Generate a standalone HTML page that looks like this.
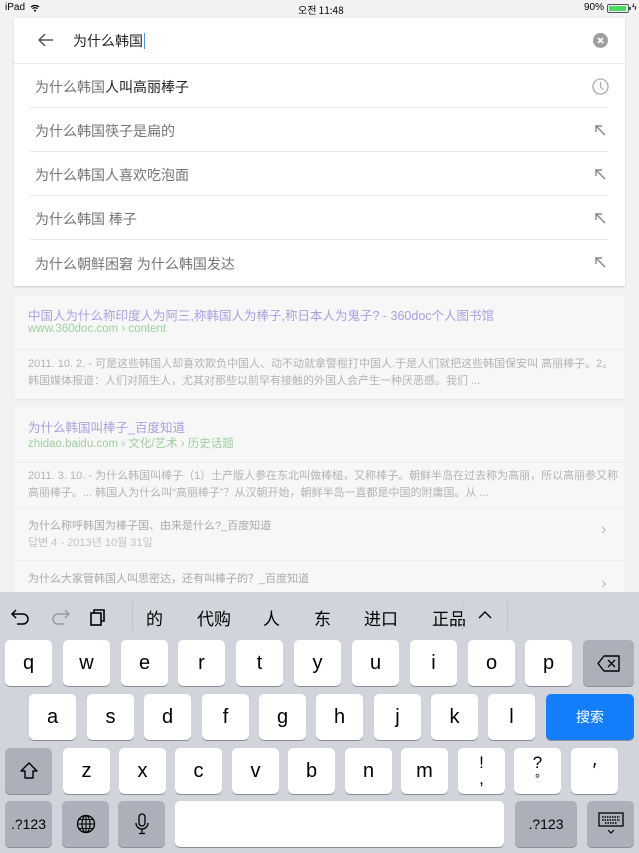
<!DOCTYPE html>
<html><head><meta charset="utf-8"><style>
*{margin:0;padding:0;box-sizing:border-box}
body{width:639px;height:853px;overflow:hidden;background:#f2f2f2;font-family:"Liberation Sans","Noto Sans CJK SC",sans-serif;position:relative}
.a{position:absolute}
.card{position:absolute;background:#fff;box-shadow:0 1px 2px rgba(0,0,0,.15)}
.sug{position:absolute;left:35px;font-size:14px;color:#757575;white-space:nowrap}
.div{position:absolute;left:30px;width:578px;height:1px;background:#ebebeb}
.rc{position:absolute;left:14px;width:611px;background:#f7f7f7;box-shadow:0 1px 1px rgba(0,0,0,.06)}
.t{position:absolute;left:14px;font-size:12.5px;white-space:nowrap}
.ln{position:absolute;left:0;width:611px;height:1px;background:#ececec}
.kb{position:absolute;left:0;top:592px;width:639px;height:261px;background:#d1d5db}
.k{position:absolute;background:#fff;border-radius:5px;box-shadow:0 1px 0 #8a8e94;font-size:20px;color:#000;display:flex;align-items:center;justify-content:center;height:46px}
.g{background:#abb0ba}
.c{position:absolute;top:605px;font-size:17px;color:#000;font-family:"Noto Sans CJK SC",sans-serif}
</style></head><body>
<div class="a" style="left:5px;top:2px;font-size:10px">iPad</div>
<svg class="a" style="left:30px;top:4px" width="10" height="8" viewBox="0 0 10 8"><path d="M1 3a6 6 0 0 1 8 0M2.5 4.6a4 4 0 0 1 5 0" stroke="#000" fill="none" stroke-width="1.2"/><circle cx="5" cy="6.6" r="1" fill="#000"/></svg>
<div class="a" style="left:298px;top:2px;font-size:10px;font-family:'Noto Sans CJK KR',sans-serif">오전 11:48</div>
<div class="a" style="left:584px;top:2px;font-size:10px">90%</div>
<div class="a" style="left:607px;top:4px;width:22px;height:9px;border:1px solid #555;border-radius:2px;padding:1px"><div style="width:17px;height:5px;background:#4cd964"></div></div>
<div class="a" style="left:629px;top:7px;width:2px;height:3px;background:#555"></div>
<div class="a" style="left:632px;top:2px;font-size:9px">ϟ</div>

<div class="card" style="left:14px;top:18px;width:611px;height:268px"></div>
<svg class="a" style="left:38px;top:33px" width="16" height="14" viewBox="0 0 16 14"><path d="M15 7H2M7 1L1 7l6 6" stroke="#555" stroke-width="1.5" fill="none"/></svg>
<div class="a" style="left:73px;top:31px;font-size:14px;color:#222">为什么韩国<span style="border-left:1px solid #4a90e2;margin-left:1px"></span></div>
<svg class="a" style="left:593px;top:33px" width="15" height="15" viewBox="0 0 15 15"><circle cx="7.5" cy="7.5" r="7.5" fill="#9e9e9e"/><path d="M5 5l5 5M10 5l-5 5" stroke="#fff" stroke-width="1.8"/></svg>
<div class="a" style="left:14px;top:63px;width:611px;height:1px;background:#e6e6e6"></div>
<div class="sug" style="top:77px">为什么韩国<span style="color:#222">人叫高丽棒子</span></div>
<svg class="a" style="left:592px;top:78px" width="17" height="17" viewBox="0 0 17 17"><circle cx="8.5" cy="8.5" r="7.5" stroke="#aaa" stroke-width="1.3" fill="none"/><path d="M8.5 4v5l3 2.5" stroke="#aaa" stroke-width="1.3" fill="none"/></svg>
<div class="div" style="top:107px"></div>
<div class="sug" style="top:121px">为什么韩国筷子是扁的</div>
<div class="div" style="top:151px"></div>
<div class="sug" style="top:165px">为什么韩国人喜欢吃泡面</div>
<div class="div" style="top:195px"></div>
<div class="sug" style="top:209px">为什么韩国 棒子</div>
<div class="div" style="top:239px"></div>
<div class="sug" style="top:254px">为什么朝鲜困窘 为什么韩国发达</div>
<svg class="a" style="left:595px;top:125px" width="11" height="11" viewBox="0 0 11 11"><path d="M10 10L1.5 1.5M1 7V1h6" stroke="#888" stroke-width="1.4" fill="none"/></svg>
<svg class="a" style="left:595px;top:169px" width="11" height="11" viewBox="0 0 11 11"><path d="M10 10L1.5 1.5M1 7V1h6" stroke="#888" stroke-width="1.4" fill="none"/></svg>
<svg class="a" style="left:595px;top:213px" width="11" height="11" viewBox="0 0 11 11"><path d="M10 10L1.5 1.5M1 7V1h6" stroke="#888" stroke-width="1.4" fill="none"/></svg>
<svg class="a" style="left:595px;top:257px" width="11" height="11" viewBox="0 0 11 11"><path d="M10 10L1.5 1.5M1 7V1h6" stroke="#888" stroke-width="1.4" fill="none"/></svg>

<div class="rc" style="top:296px;height:103px">
<div class="t" style="top:9px;color:#a9a0e0">中国人为什么称印度人为阿三,称韩国人为棒子,称日本人为鬼子? - 360doc个人图书馆</div>
<div class="t" style="top:27px;color:#9fcf9f;font-size:11.5px">www.360doc.com › content</div>
<div class="ln" style="top:53px"></div>
<div class="t" style="top:60px;color:#b3b3b3;font-size:11px;line-height:17px;white-space:normal;width:594px">2011. 10. 2. - 可是这些韩国人却喜欢欺负中国人、动不动就拿警棍打中国人.于是人们就把这些韩国保安叫 高丽棒子。2。韩国媒体报道：人们对陌生人，尤其对那些以前罕有接触的外国人会产生一种厌恶感。我们 ...</div>
</div>
<div class="rc" style="top:407px;height:190px">
<div class="t" style="top:10px;color:#a9a0e0">为什么韩国叫棒子_百度知道</div>
<div class="t" style="top:28px;color:#9fcf9f;font-size:11.5px">zhidao.baidu.com › 文化/艺术 › 历史话题</div>
<div class="ln" style="top:55px"></div>
<div class="t" style="top:61px;color:#b3b3b3;font-size:11px;line-height:17px;white-space:normal;width:594px">2011. 3. 10. - 为什么韩国叫棒子（1）土产版人参在东北叫做棒槌，又称棒子。朝鲜半岛在过去称为高丽，所以高丽参又称高丽棒子。... 韩国人为什么叫“高丽棒子”？从汉朝开始，朝鲜半岛一直都是中国的附庸国。从 ...</div>
<div class="ln" style="top:100px"></div>
<div class="t" style="top:110px;color:#aaa;font-size:11px">为什么称呼韩国为棒子国、由来是什么?_百度知道</div>
<div class="t" style="top:127px;color:#c3c3c3;font-size:11px;font-family:'Liberation Sans','Noto Sans CJK KR',sans-serif">답변 4 - 2013년 10월 31일</div>
<div class="a" style="left:587px;top:114px;color:#bbb;font-size:16px">›</div>
<div class="ln" style="top:153px"></div>
<div class="t" style="top:163px;color:#aaa;font-size:11px">为什么大家管韩国人叫思密达，还有叫棒子的？_百度知道</div>
<div class="a" style="left:587px;top:168px;color:#bbb;font-size:16px">›</div>
</div>

<div class="kb"></div>
<svg class="a" style="left:11px;top:608px" width="20" height="18" viewBox="0 0 20 18"><path d="M5 2L1 6l4 4M1 6h11a5 5 0 0 1 0 10H6" stroke="#000" stroke-width="1.5" fill="none"/></svg>
<svg class="a" style="left:50px;top:608px" width="20" height="18" viewBox="0 0 20 18"><path d="M15 2l4 4-4 4M19 6H8a5 5 0 0 0 0 10h6" stroke="#999" stroke-width="1.5" fill="none"/></svg>
<svg class="a" style="left:89px;top:607px" width="18" height="20" viewBox="0 0 18 20"><rect x="2" y="6" width="10" height="12" stroke="#000" stroke-width="1.6" fill="none"/><path d="M5 6V3h10v11h-3" stroke="#000" stroke-width="1.6" fill="none"/></svg>
<div class="a" style="left:132px;top:602px;width:1px;height:28px;background:#bfc3c9"></div>
<div class="c" style="left:146px">的</div>
<div class="c" style="left:197px">代购</div>
<div class="c" style="left:263px">人</div>
<div class="c" style="left:314px">东</div>
<div class="c" style="left:364px">进口</div>
<div class="c" style="left:432px">正品</div>
<div class="a" style="left:462px;top:602px;width:1px;height:28px;background:#bfc3c9"></div>
<svg class="a" style="left:478px;top:610px" width="14" height="9" viewBox="0 0 14 9"><path d="M1 8l6-6 6 6" stroke="#000" stroke-width="1.4" fill="none"/></svg>
<div class="a" style="left:507px;top:602px;width:1px;height:28px;background:#bfc3c9"></div>

<div class="k" style="left:5px;top:640px;width:47px">q</div>
<div class="k" style="left:63px;top:640px;width:47px">w</div>
<div class="k" style="left:121px;top:640px;width:47px">e</div>
<div class="k" style="left:178px;top:640px;width:47px">r</div>
<div class="k" style="left:236px;top:640px;width:47px">t</div>
<div class="k" style="left:294px;top:640px;width:47px">y</div>
<div class="k" style="left:352px;top:640px;width:47px">u</div>
<div class="k" style="left:410px;top:640px;width:47px">i</div>
<div class="k" style="left:468px;top:640px;width:47px">o</div>
<div class="k" style="left:525px;top:640px;width:47px">p</div>
<div class="k g" style="left:583px;top:640px;width:51px"><svg width="24" height="17" viewBox="0 0 24 17"><path d="M7 1h15v15H7L1 8.5z" stroke="#000" stroke-width="1.4" fill="none" stroke-linejoin="round"/><path d="M11 5l7 7M18 5l-7 7" stroke="#000" stroke-width="1.4"/></svg></div>

<div class="k" style="left:29px;top:694px;width:47px">a</div>
<div class="k" style="left:87px;top:694px;width:47px">s</div>
<div class="k" style="left:144px;top:694px;width:47px">d</div>
<div class="k" style="left:202px;top:694px;width:47px">f</div>
<div class="k" style="left:259px;top:694px;width:47px">g</div>
<div class="k" style="left:316px;top:694px;width:47px">h</div>
<div class="k" style="left:374px;top:694px;width:47px">j</div>
<div class="k" style="left:431px;top:694px;width:47px">k</div>
<div class="k" style="left:488px;top:694px;width:47px">l</div>
<div class="k" style="left:546px;top:694px;width:88px;background:#147efb;color:#fff;font-size:14px;font-family:'Noto Sans CJK SC',sans-serif">搜索</div>

<div class="k g" style="left:5px;top:748px;width:47px"><svg width="20" height="20" viewBox="0 0 20 20"><path d="M10 2L2 10h4v7h8v-7h4z" stroke="#000" stroke-width="1.4" fill="none" stroke-linejoin="round"/></svg></div>
<div class="k" style="left:63px;top:748px;width:47px">z</div>
<div class="k" style="left:119px;top:748px;width:47px">x</div>
<div class="k" style="left:175px;top:748px;width:47px">c</div>
<div class="k" style="left:232px;top:748px;width:47px">v</div>
<div class="k" style="left:288px;top:748px;width:47px">b</div>
<div class="k" style="left:345px;top:748px;width:47px">n</div>
<div class="k" style="left:401px;top:748px;width:47px">m</div>
<div class="k" style="left:458px;top:748px;width:47px;flex-direction:column;line-height:16px;font-size:17px">!<br>,</div>
<div class="k" style="left:514px;top:748px;width:47px;flex-direction:column;line-height:16px;font-size:17px">?<span style="font-size:13px">°</span></div>
<div class="k" style="left:571px;top:748px;width:47px">′</div>

<div class="k g" style="left:5px;top:801px;width:47px;font-size:14px">.?123</div>
<div class="k g" style="left:62px;top:801px;width:47px"><svg width="20" height="20" viewBox="0 0 20 20"><circle cx="10" cy="10" r="8.5" stroke="#000" stroke-width="1.3" fill="none"/><ellipse cx="10" cy="10" rx="4" ry="8.5" stroke="#000" stroke-width="1.2" fill="none"/><path d="M10 1.5v17M1.5 10h17M3 5.5h14M3 14.5h14" stroke="#000" stroke-width="1.1"/></svg></div>
<div class="k g" style="left:118px;top:801px;width:47px"><svg width="14" height="22" viewBox="0 0 14 22"><rect x="4" y="1" width="6" height="12" rx="3" stroke="#000" stroke-width="1.3" fill="none"/><path d="M1 10a6 6 0 0 0 12 0M7 16v4M4 20.5h6" stroke="#000" stroke-width="1.3" fill="none"/></svg></div>
<div class="k" style="left:175px;top:801px;width:329px"></div>
<div class="k g" style="left:515px;top:801px;width:62px;font-size:14px">.?123</div>
<div class="k g" style="left:587px;top:801px;width:47px"><svg width="26" height="24" viewBox="0 0 26 24"><rect x="1" y="1" width="24" height="13" stroke="#000" stroke-width="1.3" fill="none"/><path d="M4 5h18M4 8h18M7 11h12" stroke="#000" stroke-width="1.5" stroke-dasharray="1.5 1"/><path d="M10 18l3 3 3-3" stroke="#000" stroke-width="1.2" fill="none"/></svg></div>
</body></html>
